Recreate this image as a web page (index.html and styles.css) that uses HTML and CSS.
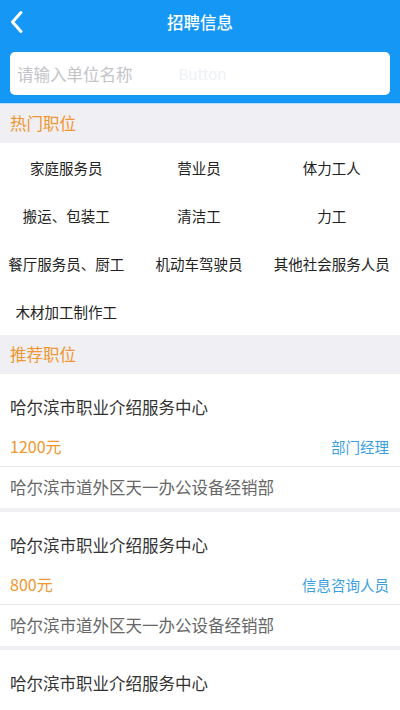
FILE: index.html
```html
<!DOCTYPE html>
<html lang="zh-CN">

<head>
    <meta charset="UTF-8">
    <title>招聘信息</title>
    <link rel="stylesheet" href="styles.css">
</head>

<body>
    <div class="page">
        <div class="nav-bar">
            <span class="back-btn">
                <svg width="20" height="24" viewBox="0 0 20 24">
                    <polyline points="11,2.5 2.5,12 11,21.5" fill="none" stroke="#fff" stroke-width="3"
                        stroke-linecap="round" stroke-linejoin="round" />
                </svg>
            </span>
            <h1 class="nav-title">招聘信息</h1>
        </div>

        <div class="search-bar">
            <div class="search-box">
                <span class="placeholder">请输入单位名称</span>
                <span class="ghost-btn">Button</span>
            </div>
        </div>

        <div class="section-title">热门职位</div>
        <div class="hot-grid">
            <div class="hot-item">家庭服务员</div>
            <div class="hot-item">营业员</div>
            <div class="hot-item">体力工人</div>
            <div class="hot-item">搬运、包装工</div>
            <div class="hot-item">清洁工</div>
            <div class="hot-item">力工</div>
            <div class="hot-item">餐厅服务员、厨工</div>
            <div class="hot-item">机动车驾驶员</div>
            <div class="hot-item">其他社会服务人员</div>
            <div class="hot-item">木材加工制作工</div>
        </div>

        <div class="section-title">推荐职位</div>
        <div class="job-list">
            <div class="job-card">
                <div class="job-main">
                    <div class="job-company">哈尔滨市职业介绍服务中心</div>
                    <div class="job-row">
                        <span class="job-salary">1200元</span>
                        <span class="job-position">部门经理</span>
                    </div>
                </div>
                <div class="job-address">哈尔滨市道外区天一办公设备经销部</div>
            </div>
            <div class="job-card">
                <div class="job-main">
                    <div class="job-company">哈尔滨市职业介绍服务中心</div>
                    <div class="job-row">
                        <span class="job-salary">800元</span>
                        <span class="job-position">信息咨询人员</span>
                    </div>
                </div>
                <div class="job-address">哈尔滨市道外区天一办公设备经销部</div>
            </div>
            <div class="job-card job-card-partial">
                <div class="job-main">
                    <div class="job-company">哈尔滨市职业介绍服务中心</div>
                </div>
            </div>
        </div>
    </div>
</body>

</html>
```

FILE: styles.css
```css
body {
    margin: 0;
    font-family: "Noto Sans CJK SC", "Noto Sans", sans-serif;
    background-color: #efeff4;
    color: #333;
    height: 710px;
    overflow: hidden;
}

.page {
    width: 400px;
}

.nav-bar {
    height: 43px;
    background: #1597f5;
    display: flex;
    align-items: center;
    justify-content: center;
    position: relative;
}

.back-btn {
    position: absolute;
    left: 10px;
    top: 10px;
    display: flex;
}

.nav-title {
    margin: 0;
    font-size: 16.5px;
    font-weight: 500;
    color: #fff;
}

.search-bar {
    background: #1597f5;
    padding: 9px 10px 8px;
    border-bottom: 1px solid #b9defb;
}

.search-box {
    height: 43px;
    background: #fff;
    border-radius: 5px;
    display: flex;
    align-items: center;
    padding-left: 7px;
}

.placeholder {
    font-size: 16.5px;
    color: #c4c4c8;
}

.ghost-btn {
    margin-left: 46px;
    font-size: 15px;
    color: #eef1f6;
}

.section-title {
    height: 39px;
    line-height: 39px;
    padding-left: 10px;
    font-size: 16.5px;
    color: #f0962e;
    background-color: #efeff4;
}

.hot-grid {
    background: #fff;
    display: grid;
    grid-template-columns: repeat(3, 1fr);
    grid-auto-rows: 48px;
    padding-right: 2px;
}

.hot-item {
    display: flex;
    align-items: center;
    justify-content: center;
    font-size: 14.5px;
    color: #222;
    white-space: nowrap;
}

.job-list {
    display: flex;
    flex-direction: column;
    gap: 4px;
}

.job-card {
    background: #fff;
}

.job-main {
    padding: 20px 11px 8px 10px;
    border-bottom: 1px solid #e6e6e9;
}

.job-card-partial .job-main {
    height: 60px;
    border-bottom: none;
}

.job-company {
    line-height: 26px;
    font-size: 16.5px;
    color: #333;
}

.job-row {
    margin-top: 14px;
    display: flex;
    justify-content: space-between;
    align-items: center;
    height: 24px;
}

.job-salary {
    font-size: 16px;
    color: #f0962e;
}

.job-position {
    font-size: 14.5px;
    color: #3a9fe0;
}

.job-address {
    height: 41px;
    line-height: 41px;
    padding-left: 10px;
    font-size: 16.5px;
    color: #666;
}
```
